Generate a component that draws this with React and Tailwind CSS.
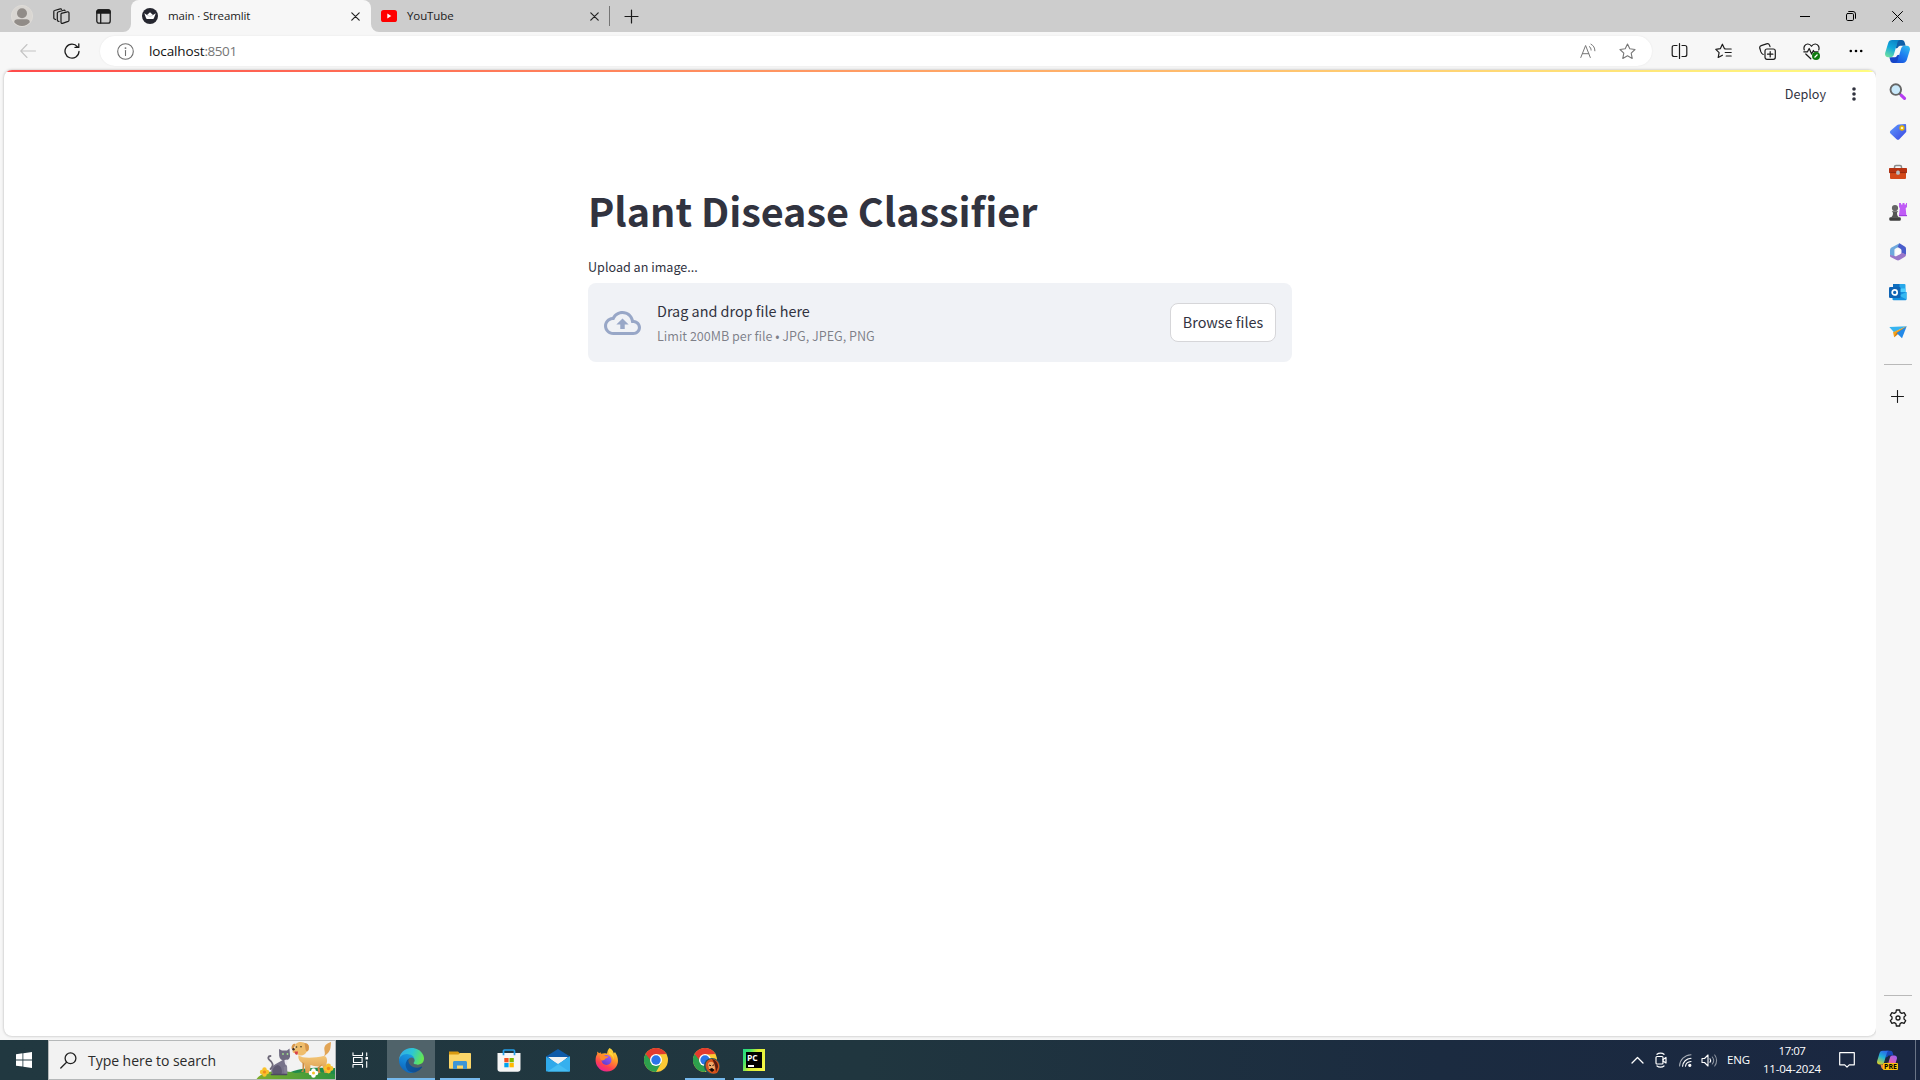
import React from "react";

const seg = "font-['Open_Sans','Noto_Sans',sans-serif]";
const src = "font-['Noto_Sans_CJK_JP',sans-serif]";

/* Line icon drawn on a pixel-sized canvas */
function Line({ w = 16, h, sw = 1, color = "#1b1b1b", fill = "none", children, className = "" }) {
  const hh = h ?? w;
  return (
    <svg width={w} height={hh} viewBox={`0 0 ${w} ${hh}`} fill={fill} stroke={color} strokeWidth={sw} strokeLinecap="round" strokeLinejoin="round" className={`block shrink-0 ${className}`}>
      {children}
    </svg>
  );
}

function Cell({ className, children }) {
  return <div className={`flex shrink-0 items-center justify-center ${className}`}>{children}</div>;
}

function CloseX() {
  return (
    <Line w={9} sw={1.2} color="#222">
      <path d="M.8.8l7.4 7.4M8.2.8L.8 8.2" />
    </Line>
  );
}

function TitleBar() {
  return (
    <div className={`flex h-8 w-full items-stretch bg-[#cdcdcd] ${seg}`}>
      <Cell className="w-[43px]">
        <svg width="22" height="22" viewBox="0 0 22 22" className="block">
          <circle cx="11" cy="11" r="10.6" fill="#d9d6d2" stroke="#dedbd7" />
          <circle cx="11" cy="8.2" r="5" fill="#918c88" />
          <path d="M3.2 17.2c0-2.2 1.6-3 3-3h9.600c1.400 0 3 .8 3 3a10 10 0 0 1-15.600 0z" fill="#918c88" />
        </svg>
      </Cell>
      <Cell className="w-9">
        <Line w={17} sw={1.2}>
          <path d="M8.300 5.400l6.100-1.600c.8-.2 1.600.3 1.600 1.200v7.200c0 .6-.4 1-.9 1.200l-5.600 2c-.8.200-1.500-.3-1.500-1.100V6.500c0-.5 0-.9.300-1.100z" />
          <path d="M6 13.500l-1-.4c-.5-.2-.7-.5-.7-1V5.200c0-.6.3-1 .8-1.200l5.600-1.700c.7-.2 1.200.1 1.400.5" />
          <path d="M2.500 11.500l-1-.5c-.4-.2-.7-.5-.7-1V3.600c0-.6.3-1 .8-1.100L7.200.9c.7-.2 1.200.1 1.400.4" />
        </Line>
      </Cell>
      <Cell className="w-[49px]">
        <Line w={15} h={15} sw={1.300}>
          <rect x=".8" y=".8" width="13.400" height="13.400" rx="2.200" />
          <path d="M1 4V2.500C1 1.500 1.500 1 2.500 1h10c1 0 1.500.5 1.500 1.500V4z" fill="#1b1b1b" />
          <path d="M4.700 4.500V14" />
        </Line>
      </Cell>
      <div className="flex w-[250px] shrink-0 items-stretch">
        <div className="relative ml-[3px] flex w-[240px] items-center rounded-t-lg bg-[#f7f7f7] pl-[11px] pr-[11px]">
          <svg width="8" height="8" viewBox="0 0 8 8" className="absolute -left-2 bottom-0"><path d="M8 0v8H0a8 8 0 0 0 8-8z" fill="#f7f7f7" /></svg>
          <svg width="8" height="8" viewBox="0 0 8 8" className="absolute -right-2 bottom-0"><path d="M0 0v8h8a8 8 0 0 1-8-8z" fill="#f7f7f7" /></svg>
          <svg width="16" height="16" viewBox="0 0 16 16" className="block shrink-0">
            <circle cx="8" cy="8" r="8" fill="#262730" />
            <path d="M2.300 5.200L5 7.100l3-2.800 3 2.800 2.800-1.900-1.900 5c-.2.600-.5.800-1 .8H5.100c-.5 0-.8-.2-1-.8z" fill="#fff" />
            <path d="M5 7.200l3 1.200 3-1.200" stroke="#bfc0c6" strokeWidth=".7" fill="none" />
          </svg>
          <span className="ml-[10px] grow whitespace-nowrap text-[11.500px] leading-4 tracking-[-0.15px] text-[#1b1b1b]">main · Streamlit</span>
          <CloseX />
        </div>
      </div>
      <div className="flex w-[231px] shrink-0 items-center pr-[10px]">
        <svg width="16" height="12" viewBox="0 0 16 12" className="ml-[3px] block shrink-0">
          <rect width="16" height="12" rx="2.600" fill="#f00" />
          <path d="M6.300 3.600v4.800l4-2.400z" fill="#fff" />
        </svg>
        <span className="ml-[10px] grow whitespace-nowrap text-[11.500px] leading-4 tracking-[-0.1px] text-[#1b1b1b]">YouTube</span>
        <CloseX />
      </div>
      <Cell className="w-px"><div className="h-5 w-px bg-[#757575]" /></Cell>
      <Cell className="w-[43px]">
        <Line w={15} sw={1.200}><path d="M7.500 1v13M1 7.500h13" /></Line>
      </Cell>
      <div className="grow" />
      <Cell className="w-[46px]"><div className="h-px w-[10px] bg-black" /></Cell>
      <Cell className="w-[46px]">
        <Line w={10} sw={1} color="#000"><rect x=".5" y="2.500" width="7" height="7" rx="1.200" /><path d="M2.700.500h4.300a2.500 2.500 0 0 1 2.500 2.500v4.300" /></Line>
      </Cell>
      <Cell className="w-[46px]">
        <Line w={11} sw={1} color="#000"><path d="M.5.5l10 10M10.500.5l-10 10" /></Line>
      </Cell>
    </div>
  );
}

function CopilotLogo({ size, pre }) {
  const id = pre ? "p" : "c";
  return (
    <svg width={size} height={size} viewBox="0 0 24 24" className="block shrink-0">
      <defs>
        <linearGradient id={`${id}1`} x1="0.6" y1="0" x2="0.2" y2="1">
          <stop offset="0" stopColor={pre ? "#2a6bea" : "#0a86c8"} />
          <stop offset=".45" stopColor={pre ? "#1fb4d8" : "#12a8dc"} />
          <stop offset="1" stopColor={pre ? "#e0d020" : "#6fe0a0"} />
        </linearGradient>
        <linearGradient id={`${id}2`} x1="0.8" y1="0" x2="0.2" y2="1">
          <stop offset="0" stopColor={pre ? "#a060f0" : "#2fb8f0"} />
          <stop offset=".5" stopColor={pre ? "#e060a8" : "#1f80f0"} />
          <stop offset="1" stopColor={pre ? "#f08050" : "#1a52dc"} />
        </linearGradient>
      </defs>
      <path d="M11 1h5.200c1.600 0 2.300 1 2.700 2.300l.9 3.200h-4.300c-1.700 0-2.600.5-3.200 2L10.500 9z" fill={pre ? "#1a48b8" : "#0f5fa8"} />
      <path d="M13 23H7.800c-1.600 0-2.300-1-2.700-2.300l-.9-3.200h4.300c1.700 0 2.600-.5 3.200-2l1.800-.5z" fill={pre ? "#f08a40" : "#1746c8"} />
      <path d="M6.800 1h7.700c-1.600.1-2.200 1.200-2.700 2.800l-3.300 11c-.5 1.700-1.400 2.700-3.200 2.700H3C.6 17.500-.4 15.500.2 13.200L3 4C3.600 2 4.800 1 6.800 1z" fill={`url(#${id}1)`} />
      <path d="M17.200 23H9.500c1.600-.1 2.200-1.200 2.700-2.800l3.300-11c.5-1.700 1.400-2.700 3.200-2.700H21c2.400 0 3.400 2 2.800 4.300L21 20c-.6 2-1.800 3-3.800 3z" fill={`url(#${id}2)`} />
    </svg>
  );
}

function Toolbar() {
  return (
    <div className={`flex h-[38px] w-full items-center bg-[#f7f7f7] ${seg}`}>
      <Cell className="w-[56px]">
        <Line w={16} sw={1.100} color="#c4c4c4"><path d="M7 1.500L.8 8 7 14.500M1 8h14.500" /></Line>
      </Cell>
      <Cell className="w-8">
        <Line w={16} sw={1.300}><path d="M15 8.500A7 7 0 1 1 13.500 3.800M14.800.8v3.600h-3.800" /></Line>
      </Cell>
      <div className="ml-3 flex h-[30px] w-[1552px] shrink-0 items-center rounded-full bg-white pl-[17px] pr-4 shadow-[0_0_2px_rgba(0,0,0,0.08)]">
        <Line w={17} sw={1.100} color="#6f6f6f"><circle cx="8.500" cy="8.500" r="7.800" /><path d="M8.500 7.500v5" /><circle cx="8.500" cy="5.100" r=".4" /></Line>
        <span className="ml-[15px] whitespace-nowrap text-[13.500px] leading-5 tracking-[-0.12px] text-[#111]">localhost</span>
        <span className="grow whitespace-nowrap text-[13.500px] leading-5 tracking-[-0.45px] text-[#767676]">:8501</span>
        <Line w={16} h={16} sw={1} color="#777"><path d="M.8 14.500L5.600 2.500 10.300 14.500M2.400 10.700h6.300M9.300 3.500c1.200.8 1.800 2 1.800 3.600M11 1.200c2.600 1.300 3.900 3.700 3.900 6.600" /></Line>
        <Line w={17} sw={1.100} color="#777" className="ml-[23px]"><path d="M8.500 1l2.300 4.800 5.200.7-3.800 3.600 1 5.300-4.700-2.600-4.700 2.600 1-5.300L1 6.500l5.200-.7z" /></Line>
      </div>
      <Cell className="w-[55px]">
        <Line w={17} h={16} sw={1.200}><path d="M8.500.6v14.800M6 2.500H3.200c-1.100 0-2 .8-2 2v7c0 1.200.9 2 2 2H6M11 2.500h2.800c1.100 0 2 .8 2 2v7c0 1.200-.9 2-2 2H11" /></Line>
      </Cell>
      <Cell className="w-[33px]">
        <Line w={17} sw={1.200}><path d="M10.300 5.900L9.500 5.700 7.400 1.200 5.300 5.700.8 6.400l3.300 3.200-.9 4.900 4.200-2.300M11.200 6h5M10.200 9.500h6M11.200 13h5" /></Line>
      </Cell>
      <Cell className="w-[55px]">
        <Line w={17} h={17} sw={1.200}><rect x="6" y="6" width="10.300" height="10.300" rx="2" /><path d="M11.200 8.500v5.400M8.500 11.200h5.400M4.200 11.500C3 11 2.300 10 1.900 8.900L.8 5.300C.5 4.100 1 3 2.200 2.600L7.500.9c1.300-.4 2.600.2 3.100 1.500l.4 1.200" /></Line>
      </Cell>
      <Cell className="w-[33px]">
        <svg width="17" height="17" viewBox="0 0 17 17" className="block">
          <path d="M1.300 7C.3 4.500 1.600 1.200 4.600 1c1.700-.1 3 .8 3.900 2.300C9.400 1.800 10.700.9 12.400 1c3 .2 4.300 3.500 3.300 6M.8 8.800h3.700l1.700-3.300 2.400 5.600 1.800-3.600.7 1.300h4M2.800 11l5 4.800" stroke="#1b1b1b" strokeWidth="1.200" fill="none" strokeLinejoin="round" strokeLinecap="round" />
          <circle cx="13" cy="13" r="4" fill="#0f7b0f" />
          <path d="M11.500 14.500l3-3" stroke="#fff" strokeWidth="1.300" />
        </svg>
      </Cell>
      <Cell className="w-[55px]">
        <svg width="14" height="4" viewBox="0 0 14 4" className="block"><circle cx="1.800" cy="2" r="1.300" /><circle cx="7" cy="2" r="1.300" /><circle cx="12.200" cy="2" r="1.300" /></svg>
      </Cell>
      <Cell className="w-[29px]"><CopilotLogo size={25} /></Cell>
    </div>
  );
}

function SearchLens() {
  return (
    <svg width="18" height="18" viewBox="0 0 18 18" className="block">
      <path d="M10.500 10.500l2 2" stroke="#555" strokeWidth="2" />
      <path d="M12.300 12.300l3.200 3" stroke="#b63df2" strokeWidth="3.200" strokeLinecap="round" />
      <circle cx="6.800" cy="6.600" r="5.300" fill="#c9e9fb" stroke="#666" strokeWidth="1.900" />
    </svg>
  );
}
function Tag() {
  return (
    <svg width="18" height="18" viewBox="0 0 18 18" className="block">
      <defs><linearGradient id="tag" x1="0" y1="0" x2="1" y2="1"><stop offset="0" stopColor="#5f9bff" /><stop offset="1" stopColor="#3a45e0" /></linearGradient></defs>
      <path d="M9.800 1.400L16 1c.7 0 1.100.4 1.100 1l.2 6.200c0 .6-.2 1-.6 1.400l-6.400 6.600c-.8.800-1.900.8-2.700 0L1.500 10.500c-.8-.8-.8-1.900 0-2.700l6.700-5.900c.4-.3.900-.5 1.600-.5z" fill="url(#tag)" />
      <circle cx="13" cy="5" r="2" fill="#fff4b8" stroke="#e8b400" strokeWidth="1.300" />
    </svg>
  );
}
function Toolbox() {
  return (
    <svg width="18" height="16" viewBox="0 0 18 16" className="block">
      <path d="M5.500 5V3c0-.9.500-1.500 1.500-1.500h4c1 0 1.500.6 1.500 1.500v2" fill="none" stroke="#8a8a8a" strokeWidth="1.500" />
      <rect x="1" y="8" width="16" height="7" rx="1" fill="#d3491a" />
      <path d="M1 4h16c.6 0 1 .4 1 1v3.500H0V5c0-.6.4-1 1-1z" fill="#b63211" />
      <path d="M0 8.600h18" stroke="#8a230b" strokeWidth=".8" />
      <rect x="7.200" y="6.500" width="3.600" height="4.200" rx="1.500" fill="#b9bec2" />
    </svg>
  );
}
function Chess() {
  return (
    <svg width="18" height="18" viewBox="0 0 18 18" className="block">
      <path d="M10 0h2v1.500h1.500V0h2v1.500H17V0h1v4l-1.300 1.200L17.300 12H10l.8-6.800L10 4z" fill="#c05cf6" />
      <path d="M10 12h8v1.200h-8z" fill="#a23ee0" />
      <circle cx="6" cy="5" r="3.100" fill="#666" />
      <path d="M2.800 8.300h6.400l-1.200 1.500c0 2.200.5 3.500 2 4.700H2c1.500-1.200 2-2.500 2-4.700z" fill="#555" />
      <rect x=".3" y="14.200" width="11.500" height="3.500" rx="1.300" fill="#3f3f3f" />
    </svg>
  );
}
function M365() {
  return (
    <svg width="18" height="18" viewBox="0 0 18 18" className="block">
      <path d="M10.500.3L3 4.300C1.600 5 1 6 1 7.500v4.300l4.400 2.300V7.500c0-1 .3-1.500 1.100-2L12 2.700z" fill="#6fa9dd" />
      <path d="M10.500.3l5.200 3.200C16.700 4.100 17 5 17 6v6l-4.500-2.300V7.500c0-.8-.3-1.400-1-1.800L8.500 4z" fill="#4a5dcb" />
      <path d="M17 11.500c0 1.200-.5 2-1.500 2.600l-5 3c-1 .6-2 .6-3 0L1.600 14c-.5-.3-.6-1-.6-2.200l4.500 1.200c.8.400 1.400.4 2.200 0l4-2.200c.6-.4.800-.7.800-1.300z" fill="#9a77c9" />
      <circle cx="9" cy="8.900" r="2.600" fill="#fff" />
    </svg>
  );
}
function Outlook() {
  return (
    <svg width="18" height="18" viewBox="0 0 18 18" className="block">
      <rect x="4" y="1" width="12.500" height="12" rx="1" fill="#28a8ea" />
      <rect x="4" y="1" width="6.500" height="5" fill="#0f6fc0" />
      <rect x="10.500" y="5.500" width="6" height="4" fill="#50d0ff" />
      <path d="M3.500 9L17.500 9v7.300c0 .5-.3.900-.9.900H4.500c-.6 0-1-.4-1-.9z" fill="#1490df" />
      <path d="M17.500 9v7.500L10 12.600z" fill="#35b8f1" />
      <rect x="0" y="4" width="11.500" height="11" rx="1.300" fill="#0f64b5" />
      <circle cx="5.700" cy="9.400" r="2.500" fill="none" stroke="#fff" strokeWidth="1.700" />
    </svg>
  );
}
function Plane() {
  return (
    <svg width="18" height="16" viewBox="0 0 18 16" className="block">
      <path d="M.3 3L17.700 2.200 5 8.200z" fill="#37b4f0" />
      <path d="M17.700 2.200L4 8.300l1.200 5z" fill="#f7a21b" />
      <path d="M17.700 2.200L7 9.300l-1.800 4z" fill="#cf7a14" />
      <path d="M17.700 2.200L7.700 9l5.300 5.200z" fill="#2389e8" />
    </svg>
  );
}

function Sidebar() {
  return (
    <div className="flex w-11 shrink-0 flex-col items-center bg-[#f7f7f7] pr-px">
      <Cell className="mt-[2px] h-10"><SearchLens /></Cell>
      <Cell className="h-10"><Tag /></Cell>
      <Cell className="h-10"><Toolbox /></Cell>
      <Cell className="h-10"><Chess /></Cell>
      <Cell className="h-10"><M365 /></Cell>
      <Cell className="h-10"><Outlook /></Cell>
      <Cell className="h-10"><Plane /></Cell>
      <div className="mt-3 h-px w-7 bg-[#b9b9b9]" />
      <Cell className="mt-[13px] h-9"><Line w={13} sw={1.100}><path d="M6.500.5v12M.5 6.500h12" /></Line></Cell>
      <div className="grow" />
      <div className="h-px w-7 bg-[#b9b9b9]" />
      <Cell className="h-[44px]">
        <Line w={18} sw={1.300}>
          <path d="M7.400 1h3.200l.5 2.400 1.700 1 2.300-.8 1.600 2.800L15 8v2l1.700 1.600-1.600 2.800-2.300-.8-1.700 1-.5 2.400H7.400l-.5-2.400-1.700-1-2.300.8-1.600-2.800L3 10V8L1.300 6.400l1.600-2.800 2.300.8 1.700-1z" />
          <circle cx="9" cy="9" r="2" />
        </Line>
      </Cell>
    </div>
  );
}

function StreamlitPage() {
  return (
    <div className="mb-1 ml-1 flex grow flex-col overflow-hidden rounded-lg bg-white shadow-[0_0_3px_rgba(0,0,0,0.28)]">
      <div className="h-0.5 w-full bg-[linear-gradient(to_right,#ff4b4b,#fffd80)]" />
      <div className={`flex h-11 items-center justify-end text-[#31333f] ${src}`}>
        <span className="text-[12.600px] leading-5">Deploy</span>
        <svg width="4" height="14" viewBox="0 0 4 14" className="ml-[26px] mr-5 block"><circle cx="2" cy="2" r="1.800" fill="#31333f" /><circle cx="2" cy="7" r="1.800" fill="#31333f" /><circle cx="2" cy="12" r="1.800" fill="#31333f" /></svg>
      </div>
      <div className={`mx-auto mt-[68px] flex w-[704px] flex-col text-[#31333f] ${src}`}>
        <h1 className="whitespace-nowrap text-[39.600px] font-bold leading-[52px] tracking-[-0.05px]">Plant Disease Classifier</h1>
        <label className="mt-[21px] text-[12.600px] leading-5">Upload an image...</label>
        <div className="mt-1.5 flex h-[79px] items-center rounded-lg bg-[#f0f2f6] px-4">
          <svg width="37" height="36" viewBox="0 0 24 24" fill="#98a7c7" className="block shrink-0" preserveAspectRatio="none">
            <path d="M19.350 10.040C18.670 6.590 15.640 4 12 4 9.110 4 6.600 5.640 5.350 8.040 2.340 8.360 0 10.910 0 14c0 3.310 2.690 6 6 6h13c2.760 0 5-2.240 5-5 0-2.640-2.050-4.780-4.650-4.960zM19 18H6c-2.210 0-4-1.790-4-4 0-2.050 1.530-3.760 3.560-3.970l1.070-.11.5-.95C8.080 7.140 9.940 6 12 6c2.620 0 4.880 1.860 5.390 4.430l.3 1.500 1.530.11c1.560.1 2.780 1.410 2.780 2.960 0 1.650-1.350 3-3 3zM8 13h2.550v3h2.900v-3H16l-4-4z" />
          </svg>
          <div className="ml-4 flex grow flex-col gap-[3px]">
            <span className="text-[14.400px] leading-6">Drag and drop file here</span>
            <span className="text-[12.600px] leading-5 tracking-[-0.02px] text-[#31333f]/60">Limit 200MB per file • JPG, JPEG, PNG</span>
          </div>
          <button className="h-[39px] w-[106px] rounded-lg border border-[#d6d6d9] bg-white pb-px text-[14.400px] leading-6 whitespace-nowrap">Browse files</button>
        </div>
      </div>
    </div>
  );
}

function Pets() {
  return (
    <svg width="82" height="38" viewBox="-1.5 0 82 38" className="block shrink-0">
      <defs>
        <linearGradient id="hill" x1="0" x2="1"><stop offset="0" stopColor="#7fae2c" /><stop offset="1" stopColor="#2c9440" /></linearGradient>
        <linearGradient id="dog" x1="0" y1="0" x2="0" y2="1"><stop offset="0" stopColor="#f5c878" /><stop offset="1" stopColor="#d99a4e" /></linearGradient>
      </defs>
      <path d="M28 36c10-9 26-10 54-9v11H28z" fill="#1f8a4c" />
      <path d="M2 38c6-8 21-10 39-6 16-2 30-2 41 2v4z" fill="url(#hill)" />
      <path d="M16 28c4-3 2-7-1-9-2-1.500-1.500-4 1-4" fill="none" stroke="#6d6878" strokeWidth="1.800" strokeLinecap="round" />
      <path d="M18 33c-3-4 0-9 5-11l7-4c3 4 3 9 2 15z" fill="#77728a" />
      <path d="M23 24c4 1 5 5 4 9h-8c-3-4 1-8 4-9z" fill="#5f5a72" />
      <path d="M24.500 8l3 1.600h5L35 7.500l.6 8c-.7 3-3 4-5.300 4-3 0-5.300-1.500-5.600-4.500z" fill="#6f6a80" />
      <path d="M30 19l3-.5-.5 6c-1.500 0-2.500-2-2.500-5.500z" fill="#e9e6ee" />
      <circle cx="28.500" cy="13" r=".9" fill="#9fe08a" /><circle cx="33" cy="13" r=".9" fill="#9fe08a" />
      <path d="M29 26l1 7h3l-.5-8z" fill="#837e94" />
      <path d="M17 33.500h15" stroke="#4e4960" strokeWidth="1.600" strokeLinecap="round" />
      <path d="M69 16c3-3 0-7 1-10 1-3 4-4 6.500-5-.5 4 0 8-3 11z" fill="#e2a556" />
      <path d="M44 14c4 4 16 3 25 1 4 0 4 5 3 8l2 9h-4l-2-7c-5 1-9 0-12-1l-.5 8H51l-1-9c-4-1-7-5-6-9z" fill="url(#dog)" />
      <path d="M50 23l-1 8h-2.500l1.500-2 0-8zM68 23l-3 4 1 5h-4l1.500-1.500-.5-4z" fill="#c98940" />
      <path d="M41 3c3-3 8-2.500 11 0 4 1 3 7 0 8-2 4-7 5-10 1-2 .5-4 0-4-2 0-1.500 2-2 2.500-3z" fill="#efbd6c" />
      <path d="M50 2c4 0 5 3 4 7-1 2-3 1-3-1zM41 3c-2-1-4 1-4 4 0 1.500 2 1 2.500 0z" fill="#d6954a" />
      <circle cx="42" cy="6" r=".8" fill="#332" /><circle cx="46.500" cy="5.800" r=".8" fill="#332" />
      <circle cx="39" cy="8.200" r="1.200" fill="#3a2a22" />
      <path d="M40 10.500h3.500l-.5 3c-1.500.8-2.500 0-3-3z" fill="#d8404a" />
      <g fill="#f9c22b"><circle cx="10" cy="28.500" r="2.200" /><circle cx="7.500" cy="31" r="2.200" /><circle cx="12.500" cy="31" r="2.200" /><circle cx="10" cy="33.500" r="2.200" /></g><circle cx="10" cy="31" r="1.600" fill="#f08a1c" />
      <g fill="#fff"><circle cx="59" cy="29.500" r="2.300" /><circle cx="56.500" cy="32" r="2.300" /><circle cx="61.500" cy="32" r="2.300" /><circle cx="59" cy="34.500" r="2.300" /></g><circle cx="59" cy="32" r="1.500" fill="#f5c329" />
      <g fill="#f9c22b"><circle cx="74" cy="25" r="2.400" /><circle cx="71.500" cy="27.500" r="2.400" /><circle cx="76.500" cy="27.500" r="2.400" /><circle cx="74" cy="30" r="2.400" /></g><circle cx="74" cy="27.500" r="1.700" fill="#f08a1c" />
    </svg>
  );
}

function Edge() {
  return (
    <svg width="25" height="25" viewBox="0 0 256 256" className="block">
      <defs>
        <linearGradient id="e1" x1="0" x2="1" y1=".5" y2=".6"><stop offset="0" stopColor="#0c59a4" /><stop offset="1" stopColor="#114a8b" /></linearGradient>
        <linearGradient id="e2" x1=".6" y1="0" x2=".2" y2="1"><stop offset="0" stopColor="#1b9de2" /><stop offset=".5" stopColor="#1381d3" /><stop offset="1" stopColor="#0f5fb4" /></linearGradient>
        <linearGradient id="e3" x1="0" x2="1" y1=".2" y2=".5"><stop offset="0" stopColor="#35a9e8" /><stop offset=".5" stopColor="#2cc6d5" /><stop offset="1" stopColor="#66e84f" /></linearGradient>
      </defs>
      <path fill="url(#e1)" d="M231 190.500a93.700 93.700 0 0 1-10.500 4.700 101.900 101.900 0 0 1-35.900 6.400c-47.300 0-88.500-32.500-88.500-74.300a31.500 31.500 0 0 1 16.400-27.300c-42.800 1.800-53.800 46.400-53.800 72.500 0 74 68.100 81.400 82.800 81.400 7.900 0 19.800-2.300 27-4.600l1.300-.4a128.300 128.300 0 0 0 66.600-52.800 4 4 0 0 0-5.400-5.600z" />
      <path fill="url(#e2)" d="M105.700 241.400a79.200 79.200 0 0 1-22.700-21.300 80.700 80.700 0 0 1 29.500-120c3.200-1.500 8.500-4.100 15.600-4a32.400 32.400 0 0 1 25.700 13 31.900 31.900 0 0 1 6.300 18.700c0-.2 24.500-79.600-80-79.600-43.900 0-80 41.600-80 78.200a130.200 130.200 0 0 0 12.100 56 128 128 0 0 0 156.400 67 75.500 75.500 0 0 1-62.800-8z" />
      <path fill="url(#e3)" d="M152.300 148.900c-.9 1-3.400 2.500-3.400 5.700 0 2.600 1.700 5.200 4.800 7.300 14.300 10 41.400 8.600 41.500 8.600a59.600 59.600 0 0 0 30.300-8.300 61.400 61.400 0 0 0 30.400-52.900c.3-22.400-8-37.300-11.300-43.900C223.500 23.900 177.700 0 128 0A128 128 0 0 0 0 126.200c.5-36.500 36.800-66 80-66 3.500 0 23.500.300 42 10 16.300 8.600 24.900 18.900 30.800 29.200 6.200 10.700 7.300 24.100 7.300 29.500s-2.700 13.300-7.800 20z" />
    </svg>
  );
}
function Folder() {
  return (
    <svg width="22" height="18" viewBox="0 0 22 18" className="block">
      <path d="M0 .5h9L11 2.500V6H0z" fill="#d99a10" />
      <path d="M0 3.500h9.500L11 2h10.200c.5 0 .8.300.8.700V17c0 .5-.3.800-.8.800H.8c-.5 0-.8-.3-.8-.8z" fill="#fbd669" />
      <path d="M4 18v-6.500c0-.9.600-1.500 1.500-1.500h11c.9 0 1.500.6 1.500 1.500V18h-4v-3.500H8V18z" fill="#3d96d8" />
    </svg>
  );
}
function Store() {
  return (
    <svg width="24" height="23" viewBox="0 0 24 23" className="block">
      <path d="M6.500 5V2c0-.7.300-1 1-1h9c.7 0 1 .3 1 1v3" fill="none" stroke="#25a0ea" strokeWidth="1.700" />
      <path d="M.5 4h23v16c0 1.700-1 2.700-2.700 2.700H3.200C1.500 22.700.5 21.700.5 20z" fill="#f6f6f6" />
      <path d="M6.500 4v2.200M17.500 4v2.200" stroke="#25a0ea" strokeWidth="1.700" />
      <rect x="7.300" y="9" width="4.300" height="4.300" fill="#f25022" /><rect x="12.500" y="9" width="4.300" height="4.300" fill="#7fba00" />
      <rect x="7.300" y="14" width="4.300" height="4.300" fill="#00a4ef" /><rect x="12.500" y="14" width="4.300" height="4.300" fill="#ffb900" />
    </svg>
  );
}
function Mail() {
  return (
    <svg width="24" height="23" viewBox="0 0 24 23" className="block">
      <path d="M12 0l12 7.500V13H0V7.500z" fill="#0f5aa8" />
      <path d="M2 8h20l-10 8z" fill="#f2f2f2" />
      <path d="M0 7.500L24 22.500H1c-.6 0-1-.4-1-1z" fill="#2fa9ea" />
      <path d="M24 7.500v14c0 .6-.4 1-1 1H1.500z" fill="#45bdf3" />
      <path d="M12 15l11 7.300c.7 0 1-.3 1-.8v-14z" fill="#36b0ee" />
    </svg>
  );
}
function Firefox() {
  return (
    <svg width="24" height="24" viewBox="0 0 24 24" className="block">
      <defs>
        <linearGradient id="ff" x1=".8" y1="0" x2=".3" y2="1"><stop offset="0" stopColor="#ffe83c" /><stop offset=".4" stopColor="#ff9a28" /><stop offset=".75" stopColor="#ff4050" /><stop offset="1" stopColor="#e8209a" /></linearGradient>
        <linearGradient id="fg" x1=".8" y1="0" x2=".2" y2="1"><stop offset="0" stopColor="#a45cf5" /><stop offset="1" stopColor="#5b3ccf" /></linearGradient>
      </defs>
      <path d="M14.500 0c3.200 1.500 4 4 4.300 5.500L20 4c3.500 5 4 11 1 15a11.300 11.300 0 0 1-18.500-.5C-.5 13.800.5 8.500 2.200 6V3.500l2 1.800 1.300-1 .5 1.500c3-1 5.500-.5 6 0 .3-2.300 1-4.300 2.500-5.800z" fill="url(#ff)" />
      <circle cx="11.500" cy="12" r="5" fill="url(#fg)" />
      <path d="M5.500 7c2-.7 4 0 5 1.300h3c-.5 1.600-2 2-3 2.200-.6 1.200-2 2-3.200 2C5 12 4.500 9 5.500 7z" fill="#ff8a2a" />
      <path d="M14 3c3 1.500 5.300 4.600 4.500 9-.2-3-2-5.700-4.500-6z" fill="#ffd93b" />
    </svg>
  );
}
function Chrome() {
  return (
    <svg width="24" height="24" viewBox="0 0 24 24" className="block">
      <circle cx="12" cy="12" r="12" fill="#fcc934" />
      <path d="M12 12L1.600 6A12 12 0 0 0 12 24l5.200-9z" fill="#2da04d" />
      <path d="M1.600 6a12 12 0 0 1 20.800 0L12 6.500 8 14z" fill="#e33b2e" />
      <path d="M12 6h10.400H12z" fill="#fcc934" />
      <circle cx="12" cy="12" r="6" fill="#fff" />
      <circle cx="12" cy="12" r="4.700" fill="#2b74e8" />
    </svg>
  );
}
function ChromeProfile() {
  return (
    <div className="relative">
      <Chrome />
      <svg width="16" height="16" viewBox="0 0 16 16" className="absolute -bottom-[2px] -right-[3px] block">
        <circle cx="8" cy="8" r="8" fill="#23535c" />
        <path d="M2 5c2-5 9-5 12-1 2 3 2 7-1 11-3 1-6 1-8-1C2 12 1 8 2 5z" fill="#d4521c" />
        <path d="M8 1c4 1 6 4 6 8l-2 5c0-4-1-8-4-13z" fill="#5a1c10" />
        <path d="M4 6c1-3 5-3 6 0l1 4c-1 4-5 4-6 1z" fill="#f0a868" />
        <path d="M5 7l2 .7M8.500 7.500l1.500-.7M5.500 11.500l2.500-1 2 1.500-2 1.500z" stroke="#24120c" strokeWidth="1" />
      </svg>
    </div>
  );
}
function PyCharm() {
  return (
    <div className="flex h-[22px] w-[22px] items-center justify-center bg-[linear-gradient(115deg,#21d789_0%,#3fe56a_22%,#d8ee35_48%,#fcf84a_100%)]">
      <div className="relative h-[16px] w-[16px] bg-black">
        <span className="absolute left-[1.500px] top-px font-['Open_Sans',sans-serif] text-[8.500px] font-bold leading-[9px] text-white">PC</span>
        <span className="absolute bottom-[1.500px] left-[2px] h-[1.500px] w-[6px] bg-white" />
      </div>
    </div>
  );
}

function Task({ className, line, children }) {
  return (
    <div className={`relative flex h-10 shrink-0 items-center justify-center ${className}`}>
      {children}
      {line && <div className={`absolute bottom-0 left-1/2 h-[2px] -translate-x-1/2 bg-[#76b9ed] ${line}`} />}
    </div>
  );
}

function Taskbar() {
  return (
    <div className={`flex h-10 w-full items-stretch bg-[linear-gradient(to_right,#213840_0%,#20363f_45%,#1b2b40_75%,#1a2741_100%)] text-white ${seg}`}>
      <Task className="w-12">
        <svg width="16" height="16" viewBox="0 0 16 16" fill="#fff" className="block"><path d="M0 2.200l6.500-.9v6.200H0zM7.300 1.200L16 0v7.500H7.300zM0 8.400h6.500v6.200L0 13.700zM7.300 8.400H16V16l-8.700-1.200z" /></svg>
      </Task>
      <div className="flex w-[288px] shrink-0 items-center border border-[#b5b8b9] bg-[#f2f2f2] pl-[11px]">
        <Line w={17} sw={1.300} color="#222"><circle cx="10.500" cy="6.300" r="5.400" /><path d="M6.600 10.200L.8 16" /></Line>
        <span className="ml-[11px] grow whitespace-nowrap pt-px text-[14px] leading-5 tracking-[-0.04px] text-[#2b2b2b]">Type here to search</span>
        <Pets />
      </div>
      <Task className="w-[51px] pr-[3px]">
        <Line w={17} h={16} sw={1.100} color="#fff"><path d="M1 .8v2.700h9.500V.8M1 15.200v-2.700h9.500v2.700M1.500 5.500h8.600v5H1.500zM14.700.8v3M14.700 9.500v5.700" /><rect x="13.500" y="5" width="2.500" height="2.500" fill="#fff" stroke="none" /></Line>
      </Task>
      <Task className="w-12 bg-[#50636a]" line="w-full"><Edge /></Task>
      <Task className="w-[49px]" line="w-10"><Folder /></Task>
      <Task className="w-[49px]"><Store /></Task>
      <Task className="w-[49px]"><Mail /></Task>
      <Task className="w-[49px]"><Firefox /></Task>
      <Task className="w-[49px]"><Chrome /></Task>
      <Task className="w-[49px]" line="w-10"><ChromeProfile /></Task>
      <Task className="w-[49px]" line="w-10"><PyCharm /></Task>
      <div className="grow" />
      <Task className="w-6"><Line w={13} h={8} sw={1.300} color="#fff"><path d="M1 7l5.500-5.500L12 7" /></Line></Task>
      <Task className="w-6">
        <Line w={12} h={16} sw={1.200} color="#fff"><rect x="1" y="4.500" width="7" height="7.500" rx="1" /><path d="M8 7.500l3-2v5.500l-3-2M2 2.300C3.700.8 7.300.8 9 2.300M2 14c1.700 1.400 5.300 1.400 7 0" /></Line>
      </Task>
      <Task className="w-[25px]">
        <Line w={13} h={13} sw={1.100} color="#fff"><path d="M.6 12C.8 5.800 5.500 1.200 12 .8" opacity=".6" /><path d="M3.600 12.300C3.900 8 7.300 4.500 12 4.300M6.500 12.300c.3-2.500 2.500-4.600 5.500-4.800" /><circle cx="10.800" cy="11.300" r="1.100" fill="#fff" /></Line>
      </Task>
      <Task className="w-[22px]">
        <Line w={17} h={13} sw={1.100} color="#fff"><path d="M1 4.500h2.500L7 1v11L3.500 8.500H1zM9 4.800c.7 1 .7 2.500 0 3.500" /><path d="M11.300 3c1.600 2 1.600 5 0 7M13.700 1c2.500 3.200 2.500 7.800 0 11" opacity=".5" /></Line>
      </Task>
      <Task className="w-[37px]"><span className="text-[11.500px] leading-4 tracking-[-0.2px]">ENG</span></Task>
      <div className="flex w-[70px] shrink-0 flex-col items-center pt-[2px] text-[11.500px] leading-[18px]">
        <span className="tracking-[-0.5px]">17:07</span>
        <span className="tracking-[-0.2px]">11-04-2024</span>
      </div>
      <Task className="w-10">
        <Line w={16} h={16} sw={1.200} color="#fff"><path d="M.7.700h14.600v12.100h-5L8 15.100l-2.300-2.300h-5z" /></Line>
      </Task>
      <Task className="w-10">
        <div className="relative">
          <CopilotLogo size={20} pre />
          <span className="absolute -right-px top-[13px] flex h-[7px] w-[15px] items-center justify-center rounded-[1px] bg-[#ffc20e] text-[7px] font-bold leading-none text-black">PRE</span>
        </div>
      </Task>
      <div className="ml-[8px] mr-1 w-px bg-[#6a7486]" />
    </div>
  );
}

export default function App() {
  return (
    <div className="flex h-[1080px] w-[1920px] flex-col overflow-hidden bg-[#f7f7f7]">
      <TitleBar />
      <Toolbar />
      <div className="flex min-h-0 grow">
        <StreamlitPage />
        <Sidebar />
      </div>
      <Taskbar />
    </div>
  );
}
